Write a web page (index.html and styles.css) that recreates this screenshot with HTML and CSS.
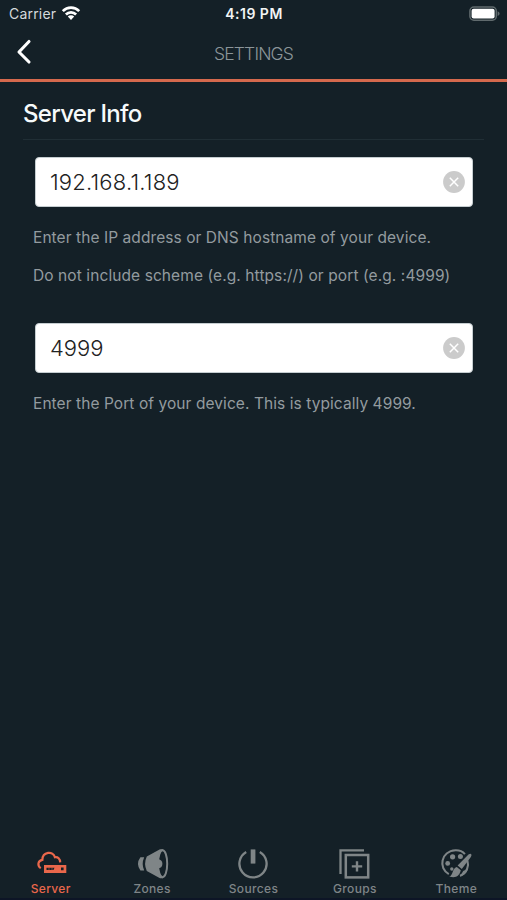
FILE: index.html
```html
<!DOCTYPE html>
<html lang="en">
<head>
<meta charset="utf-8">
<title>Settings</title>
<link rel="stylesheet" href="styles.css">
</head>
<body>
<div class="screen">
  <div class="status">
    <div class="carrier"><span>Carrier</span>
      <svg width="20" height="16" viewBox="0 0 20 16"><g fill="none" stroke="#fff" stroke-width="2.7"><path d="M1.8 6.1a11.5 11.5 0 0 1 16.4 0"/><path d="M4.9 9.5a7.2 7.2 0 0 1 10.2 0"/></g><path d="M6.8 11.6a4.6 4.6 0 0 1 6.4 0L10 15z" fill="#fff"/></svg>
    </div>
    <span class="clock">4:19 PM</span>
    <svg class="battery" width="31" height="16" viewBox="0 0 31 16"><rect x=".9" y="1" width="26.4" height="13.2" rx="4" fill="none" stroke="#606a6d" stroke-width="1.5"/><rect x="2.6" y="2.7" width="23" height="9.8" rx="2" fill="#fff"/><path d="M28.6 5.3q2 .8 2 2.4t-2 2.3z" fill="#606a6d"/></svg>
  </div>
  <header class="header">
    <svg class="back" width="16" height="26" viewBox="0 0 16 26"><path d="M13 2.5 3 13l10 10" fill="none" stroke="#fff" stroke-width="3.1" stroke-linecap="round" stroke-linejoin="round"/></svg>
    <h1 class="title">SETTINGS</h1>
  </header>
  <main class="content">
    <h2 class="heading">Server Info</h2>
    <div class="field"><span class="ip">192.168.1.189</span><svg width="22" height="22" viewBox="0 0 22 22"><circle cx="11" cy="11" r="10.9" fill="#cbcbcb"/><path d="m6.8 6.8 8.4 8.4m0-8.4-8.4 8.4" stroke="#fff" stroke-width="1.5"/></svg></div>
    <p class="hint hint-ip">Enter the IP address or DNS hostname of your device.</p>
    <p class="hint hint-scheme">Do not include scheme (e.g. https://) or port (e.g. :4999)</p>
    <div class="field field-port"><span class="port">4999</span><svg width="22" height="22" viewBox="0 0 22 22"><circle cx="11" cy="11" r="10.9" fill="#cbcbcb"/><path d="m6.8 6.8 8.4 8.4m0-8.4-8.4 8.4" stroke="#fff" stroke-width="1.5"/></svg></div>
    <p class="hint hint-port">Enter the Port of your device. This is typically 4999.</p>
  </main>
  <nav class="tabs">
    <div class="tab active">
      <svg width="34" height="32" viewBox="-2 0 34 32"><path d="M4.8 20.1C1.2 18 1.6 12.6 6.4 11.8 6.5 3.6 17.2 2.5 18.9 9.2c3-.5 5.2 1.5 5.3 5.2" fill="none" stroke="currentColor" stroke-width="2.2"/><rect x="8" y="17" width="22.3" height="8" fill="currentColor"/><path d="M10.5 19.8h8l-1 2.2h-7zM25 19.6h2.6v2.6H25z" fill="#142027"/><path d="M13 19.5v3m3-3v3" stroke="currentColor" stroke-width=".5"/></svg>
      <span>Server</span></div>
    <div class="tab">
      <svg width="34" height="32" viewBox="0 0 34 32"><path d="M9.2 9.2H5.4Q.6 15.8 5.4 22.4h3.8q-3-6.6 0-13.2z" fill="currentColor"/><path d="M11.8 8.6 25 1.2h3v29h-3L11.8 22.9q-3.4-7 0-14.3z" fill="currentColor"/><ellipse cx="27.6" cy="15.7" rx="4.6" ry="13.5" fill="#142027" stroke="currentColor" stroke-width="2"/><path d="M22 11.2q5.4-.2 5.4 4.5T22 20.2z" fill="currentColor"/></svg>
      <span>Zones</span></div>
    <div class="tab">
      <svg width="34" height="32" viewBox="0 0 34 32"><path d="M10.2 4A13.6 13.6 0 1 0 23.8 4" fill="none" stroke="currentColor" stroke-width="2.3"/><path d="M14.7 1.4h4.7v14.2h-4.7z" fill="currentColor"/></svg>
      <span>Sources</span></div>
    <div class="tab">
      <svg width="34" height="32" viewBox="1 0 34 32"><path d="M27 2.4H3.5v23.5" fill="none" stroke="currentColor" stroke-width="2.3"/><rect x="8.8" y="7" width="22.4" height="22.4" fill="none" stroke="currentColor" stroke-width="2.5"/><path d="M20 13.2v10.4M14.8 18.4h10.4" stroke="currentColor" stroke-width="2.4"/></svg>
      <span>Groups</span></div>
    <div class="tab">
      <svg width="34" height="32" viewBox="-1 0 34 32"><path d="M8.8 26.1C-1.8 20.6.6 3.3 15.6 2.3c4.3-.1 7.2 1.4 9.3 3.8M27.4 12.5c1.7 5.3-.1 12-7.4 15.3" fill="none" stroke="currentColor" stroke-width="2.1"/><g fill="currentColor"><circle cx="12.6" cy="8.8" r="2.6"/><circle cx="20.4" cy="8.6" r="2.5"/><circle cx="7.7" cy="15.4" r="2.4"/><circle cx="11.8" cy="21" r="1.7"/><path d="M30.8 5.9c1.3.5.5 2.2-.3 3.5L21.8 21l-4.2-3.4L27.5 7.6c1-1 2.3-2 3.3-1.7zM16.8 19l4 3.3c-1.7 6.4-5.2 8-11.6 6.3 4.2-1.1 2.6-8 7.6-9.6zM28 20.7l-4.8 2.4-3.2 5.5c4.1-1 7.1-4 8-7.9z"/></g></svg>
      <span>Theme</span></div>
  </nav>
</div>
</body>
</html>
```

FILE: styles.css
```css
* { box-sizing: border-box; }
body, h1, h2, p { margin: 0; }
body { background: #142027; font-family: Inter, "Liberation Sans", sans-serif; }
svg { display: block; flex: none; }
.screen { width: 507px; height: 900px; display: flex; flex-direction: column; background: #142027; border-bottom: 2px solid #0d1526; overflow: hidden; }
.status { height: 27px; display: grid; grid-template-columns: 1fr auto 1fr; align-items: center; padding: 0 7px 0 9px; color: #f2f4f5; }
.carrier { display: flex; align-items: center; gap: 5px; font-size: 14px; letter-spacing: .2px; color: #d5dadc; }
.carrier svg { margin-bottom: 2px; }
.clock { font-size: 14px; font-weight: 600; letter-spacing: .5px; margin-right: 1px; }
.battery { justify-self: end; }
.header { height: 55px; border-bottom: 3px solid #d5694d; display: grid; grid-template-columns: 1fr auto 1fr; align-items: center; padding: 0 16px; }
.back { margin-bottom: 2px; }
.title { font-size: 17.5px; line-height: 22px; font-weight: 300; letter-spacing: -.85px; color: #8b9599; padding-top: 2px; }
.content { flex: 1; padding: 0 23px; }
.heading { height: 58px; line-height: 63px; border-bottom: 1px solid #202e35; font-size: 24px; font-weight: 500; letter-spacing: -.7px; color: #f6fafb; }
.field { height: 50px; margin: 17px 11px 0 12px; padding: 0 7px 0 14px; border: 1px solid #c5cdd0; border-radius: 4px; background: #fff; display: flex; align-items: center; justify-content: space-between; font-size: 22px; font-weight: 300; color: #222; }
.ip { letter-spacing: .2px; }
.hint { margin-left: 10px; font-size: 15.5px; line-height: 20px; letter-spacing: .07px; color: #939b9f; white-space: nowrap; }
.hint-ip { margin-top: 21px; }
.hint-scheme { margin-top: 18px; letter-spacing: .09px; }
.field-port { margin-top: 37px; }
.hint-port { margin-top: 21px; }
.tabs { height: 53px; margin-top: -1px; display: grid; grid-template-columns: repeat(5, 1fr); }
.tab { display: flex; flex-direction: column; align-items: center; padding-top: 3px; color: #7f8587; font-size: 12px; line-height: 15px; font-weight: 500; letter-spacing: .35px; }
.active { color: #e9674b; }
.tab svg { margin-bottom: 1px; }
```
